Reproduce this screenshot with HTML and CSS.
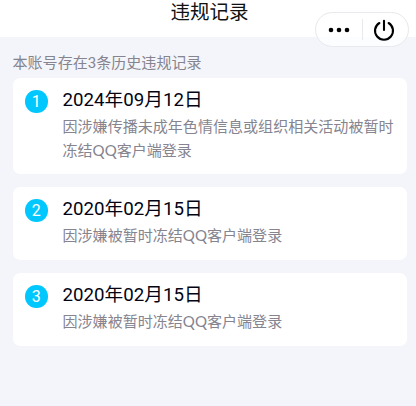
FILE: index.html
```html
<!DOCTYPE html>
<html lang="zh-CN">
<head>
<meta charset="utf-8">
<title>违规记录</title>
<link rel="stylesheet" href="styles.css">
</head>
<body>
<header class="header">
  <h1 class="title">违规记录</h1>
  <div class="capsule">
    <svg class="more" viewBox="0 0 22 6" width="22" height="6"><circle cx="3" cy="3" r="2.3"/><circle cx="11" cy="3" r="2.3"/><circle cx="19" cy="3" r="2.3"/></svg>
    <span class="divider"></span>
    <svg class="power" viewBox="0 0 22 22" width="22" height="22"><path d="M6.4 4A9 9 0 1 0 15.6 4M11 1.8V11"/></svg>
  </div>
</header>
<main class="content">
  <p class="summary">本账号存在3条历史违规记录</p>
  <section class="card">
    <span class="badge">1</span>
    <div class="body"><h2 class="date">2024年09月12日</h2><p class="reason">因涉嫌传播未成年色情信息或组织相关活动被暂时<br>冻结QQ客户端登录</p></div>
  </section>
  <section class="card">
    <span class="badge">2</span>
    <div class="body"><h2 class="date">2020年02月15日</h2><p class="reason">因涉嫌被暂时冻结QQ客户端登录</p></div>
  </section>
  <section class="card">
    <span class="badge">3</span>
    <div class="body"><h2 class="date">2020年02月15日</h2><p class="reason">因涉嫌被暂时冻结QQ客户端登录</p></div>
  </section>
</main>
</body>
</html>
```
FILE: styles.css
```css
* { box-sizing: border-box; margin: 0; padding: 0; }
body { width: 416px; height: 406px; overflow: hidden; background: #f4f5fa; font-family: "Noto Sans CJK SC", sans-serif; }
.header { position: relative; height: 37px; background: #fff; }
.title { padding-left: 3px; text-align: center; font-size: 19.5px; font-weight: 400; line-height: 22px; color: #111; }
.capsule { position: absolute; left: 315px; top: 12px; width: 94px; height: 35px; display: flex; align-items: center; border: 1px solid #e8e8ed; border-radius: 18px; background: rgba(255, 255, 255, 0.75); padding-left: 12px; }
.divider { width: 1px; height: 21px; margin: 0 10px 0 12px; background: #e8e8ed; }
.more { fill: #000; }
.power { fill: none; stroke: #000; stroke-width: 2.1; stroke-linecap: round; }
.content { padding: 15px 9px 0 12.5px; }
.summary { height: 26px; font-family: Roboto, "Noto Sans CJK SC", sans-serif; font-size: 15.05px; line-height: 22px; color: #85848f; }
.card { display: flex; gap: 15px; min-height: 73px; margin-bottom: 13px; padding: 8px 0 12px 12.5px; border-radius: 7px; background: #fff; }
.badge { flex: none; width: 22.5px; height: 22.5px; margin-top: 4px; border-radius: 50%; background: #00c8ff; color: #fff; font-family: Roboto, sans-serif; font-size: 16px; line-height: 23px; text-align: center; }
.date { margin-bottom: 1px; font-family: Roboto, "Noto Sans CJK SC", sans-serif; font-size: 18.7px; font-weight: 400; line-height: 28px; color: #030313; }
.reason { font-family: Lato, "Noto Sans CJK SC", sans-serif; font-size: 15.05px; line-height: 23.5px; color: #85848f; white-space: nowrap; }
```
